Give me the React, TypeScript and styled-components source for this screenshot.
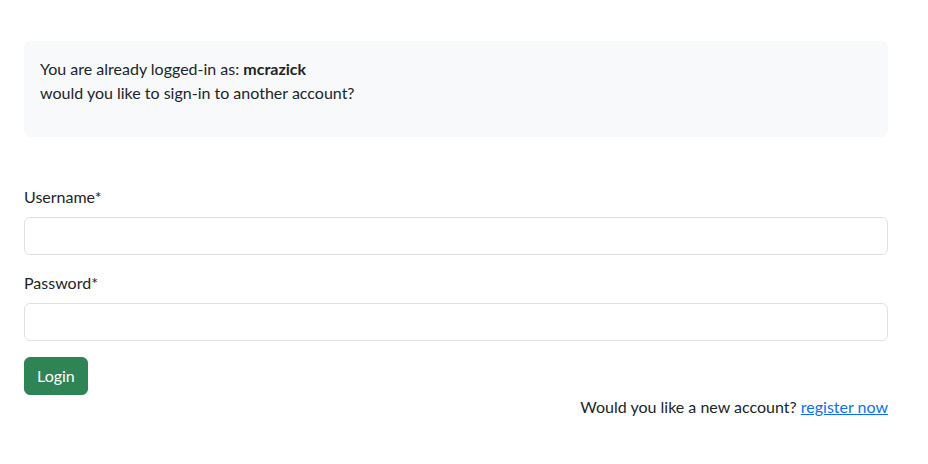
import React from "react";
import styled, { createGlobalStyle } from "styled-components";

const Global = createGlobalStyle`
  html, body { margin: 0; padding: 0; background: #fff; }
  body {
    font-family: Lato, "Noto Sans", sans-serif;
    font-size: 16px;
    line-height: 1.5;
    color: #212529;
  }
  * { box-sizing: border-box; }
`;

const Page = styled.div`
  padding: 41px 40px 0 24px;
  width: 928px;
`;

const Notice = styled.div`
  background: #f8f9fa;
  border-radius: 6px;
  padding: 16px 16px 32px;
  margin-bottom: 48px;
`;

const NoticeLine = styled.div``;

const Form = styled.form`
  display: flex;
  flex-direction: column;
`;

const Field = styled.div`
  margin-bottom: 16px;
  display: flex;
  flex-direction: column;
`;

const Label = styled.label`
  margin-bottom: 8px;
`;

const Input = styled.input`
  height: 38px;
  border: 1px solid #dee2e6;
  border-radius: 6px;
  padding: 6px 12px;
  font: inherit;
  background: #fff;
`;

const Button = styled.button`
  align-self: flex-start;
  height: 38px;
  padding: 6px 12px;
  background: #2f8456;
  border: 1px solid #2f8456;
  border-radius: 6px;
  color: #fff;
  font: inherit;
`;

const Footer = styled.div`
  text-align: right;
`;

const Link = styled.a`
  color: #0d6efd;
  text-decoration: underline;
`;

export default function App() {
  return (
    <>
      <Global />
      <Page>
        <Notice>
          <NoticeLine>
            You are already logged-in as: <b>mcrazick</b>
          </NoticeLine>
          <NoticeLine>would you like to sign-in to another account?</NoticeLine>
        </Notice>
        <Form>
          <Field>
            <Label>Username*</Label>
            <Input type="text" />
          </Field>
          <Field>
            <Label>Password*</Label>
            <Input type="password" />
          </Field>
          <Button type="button">Login</Button>
        </Form>
        <Footer>
          Would you like a new account? <Link href="#">register now</Link>
        </Footer>
      </Page>
    </>
  );
}
